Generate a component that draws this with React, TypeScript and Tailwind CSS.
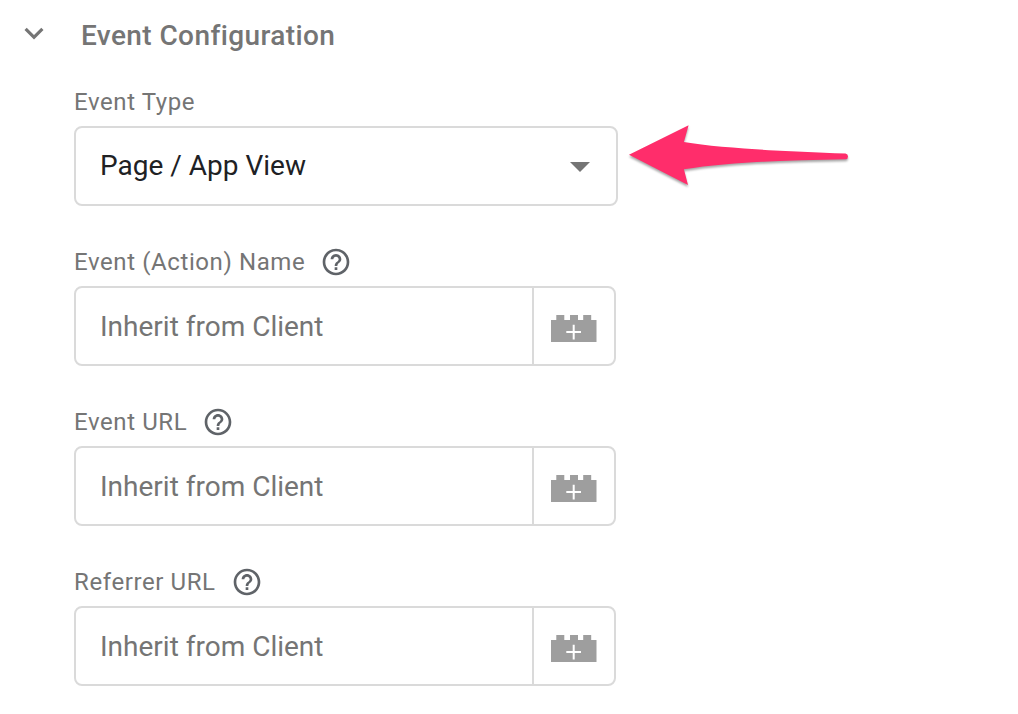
import React from "react";

function HelpIcon() {
  return (
    <svg className="h-8 w-8 shrink-0" viewBox="0 0 24 24" fill="#5f6368" aria-hidden="true">
      <path d="M11 18h2v-2h-2v2zm1-16C6.48 2 2 6.48 2 12s4.48 10 10 10 10-4.48 10-10S17.52 2 12 2zm0 18c-4.41 0-8-3.59-8-8s3.59-8 8-8 8 3.59 8 8-3.59 8-8 8zm0-14c-2.21 0-4 1.79-4 4h2c0-1.1.9-2 2-2s2 .9 2 2c0 2-3 1.75-3 5h2c0-2.25 3-2.5 3-5 0-2.21-1.79-4-4-4z" />
    </svg>
  );
}

function BrickIcon() {
  return (
    <svg className="h-[27px] w-[46px]" viewBox="0 0 46 27" aria-hidden="true">
      <path
        d="M0 5H5.3V0H13.3V5H19V0H27V5H32.2V0H40.2V5H45.5V27H0Z"
        fill="#9e9e9e"
      />
      <path d="M15.3 17H30M22.7 9.8V24.4" stroke="#fff" strokeWidth="2" fill="none" />
    </svg>
  );
}

function Label({ text, help = false }: { text: string; help?: boolean }) {
  return (
    <div className="flex h-8 items-center gap-[15px] text-2xl leading-8 tracking-[0.6px] whitespace-nowrap text-[#757575]">
      <span>{text}</span>
      {help && <HelpIcon />}
    </div>
  );
}

function VariableField({ label }: { label: string }) {
  return (
    <div className="flex flex-col gap-2">
      <Label text={label} help />
      <div className="flex h-20 w-[542px] rounded-lg border-2 border-[#dadada]">
        <div className="flex flex-1 items-center pt-0.5 pl-6 text-[28px] text-[#757575]">
          Inherit from Client
        </div>
        <button
          type="button"
          aria-label="Insert variable"
          className="flex w-[82px] items-center justify-center border-l-2 border-[#dadada] pt-[5px]"
        >
          <BrickIcon />
        </button>
      </div>
    </div>
  );
}

function PointerArrow() {
  return (
    <svg
      className="absolute -top-2.5 left-[546px] h-[76px] w-[236px] drop-shadow-[0_2px_1px_rgba(0,0,0,0.35)]"
      viewBox="622 118 236 76"
      aria-hidden="true"
    >
      <path
        d="M629 154.8L688.6 125.3L683.9 142C722 148.5 790 151.5 845.5 153.5Q848 153.9 848 156.4Q848 159 845.5 159.2C790 160.3 729 161.5 683.9 169.3L688 185Z"
        fill="#ff2d6b"
      />
    </svg>
  );
}

export default function App() {
  return (
    <main className="h-[714px] w-[1018px] overflow-hidden bg-white font-['Roboto',sans-serif]">
      <header className="flex h-[86px] items-start pt-[15px] pl-[15px]">
        <svg className="h-[38px] w-[38px] shrink-0" viewBox="0 0 24 24" fill="#757575" aria-hidden="true">
          <path d="M16.59 8.09L12 12.67 7.41 8.09 6 9.5l6 6 6-6z" />
        </svg>
        <h2 className="mt-px ml-[28px] text-[28px] leading-10 font-medium tracking-[0.4px] text-[#757575]">
          Event Configuration
        </h2>
      </header>
      <div className="flex flex-col gap-10 pl-[74px]">
        <div className="flex flex-col gap-2">
          <Label text="Event Type" />
          <div className="relative flex h-20 w-[544px] items-center justify-between rounded-lg border-2 border-[#dadada] pr-[26px] pl-6">
            <span className="text-[28px] text-[#202124]">Page / App View</span>
            <svg className="mt-0.5 h-[10px] w-5" viewBox="0 0 20 10" fill="#757575" aria-hidden="true">
              <path d="M0 0h20L10 10z" />
            </svg>
            <PointerArrow />
          </div>
        </div>
        <VariableField label="Event (Action) Name" />
        <VariableField label="Event URL" />
        <VariableField label="Referrer URL" />
      </div>
    </main>
  );
}
